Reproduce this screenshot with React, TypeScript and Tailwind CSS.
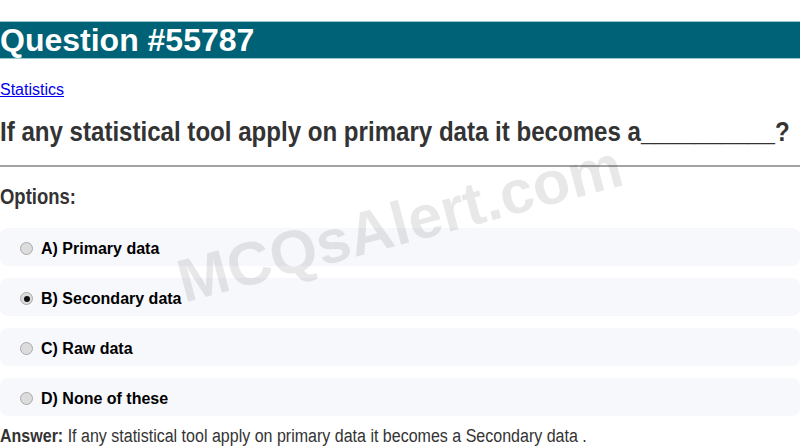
import React from "react";

const options = [
  { id: "A", text: "Primary data" },
  { id: "B", text: "Secondary data" },
  { id: "C", text: "Raw data" },
  { id: "D", text: "None of these" },
];

const selected = "B";

function Radio({ checked }: { checked: boolean }) {
  return (
    <span className="flex h-[13px] w-[13px] items-center justify-center rounded-full border border-[#a9a9a9] bg-[#dcdcdc]">
      {checked && <span className="h-[6px] w-[6px] rounded-full bg-[#111]" />}
    </span>
  );
}

export default function App() {
  return (
    <div className="relative h-[446px] overflow-hidden bg-white font-['Liberation_Sans',Arial,sans-serif]">
      <div className="pt-[21px]">
        <h1 className="h-[38px] border-y border-[#9cc6d0] bg-[#006276] text-[32px] font-bold leading-[36px] text-white">
          Question #55787
        </h1>
      </div>

      <div className="mt-[22px] text-[16px] leading-[18px]">
        <a href="#" className="text-[#0000ee] underline">
          Statistics
        </a>
      </div>

      {/* narrow font is not installed, so squeeze Liberation Sans */}
      <h2 className="mt-[17px] origin-left scale-x-[0.86] whitespace-nowrap text-[28px] font-bold leading-[32px] text-[#333]">
        If any statistical tool apply on primary data it becomes a__________?
      </h2>

      <hr className="mt-[17px] border-0 border-t-2 border-[#a3a3a3]" />

      <div className="mt-[18px] origin-left scale-x-[0.84] text-[22px] font-bold leading-[24px] text-[#333]">
        Options:
      </div>

      <div className="mt-[19px] flex flex-col gap-[12px]">
        {options.map((o) => (
          <label
            key={o.id}
            className="flex h-[38px] items-center gap-[8px] rounded-[8px] bg-[#f7f8fc] pl-[20px] pt-[3px] text-[16px] font-bold text-black"
          >
            <Radio checked={o.id === selected} />
            <span>
              {o.id}) {o.text}
            </span>
          </label>
        ))}
      </div>

      <p className="mt-[10px] origin-left scale-x-[0.89] whitespace-nowrap text-[18px] leading-[20px] text-[#333]">
        <span className="font-bold">Answer:</span> If any statistical tool apply on primary data it becomes a Secondary
        data .
      </p>

      <div className="pointer-events-none absolute left-[400px] top-[224px] -translate-x-1/2 -translate-y-1/2 -rotate-[15deg] whitespace-nowrap text-[61px] font-bold text-black/[0.09]">
        MCQsAlert.com
      </div>
    </div>
  );
}
